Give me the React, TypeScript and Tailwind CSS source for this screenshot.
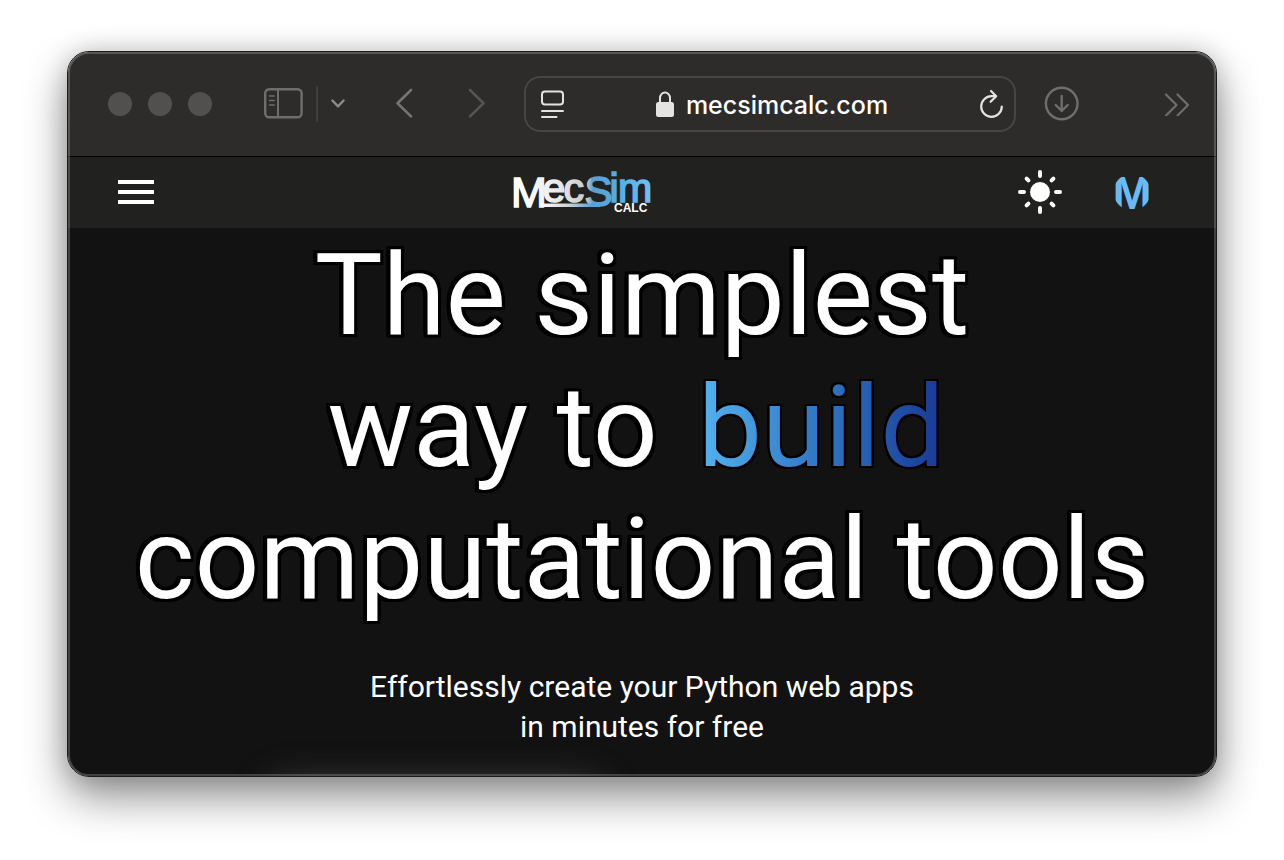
import React from "react";

function BrowserToolbar() {
  return (
    <div className="flex h-[105px] items-center border-b border-black bg-[#2e2c2a] pr-[25px] pl-10 text-[#6f6e6c]">
      <div className="flex shrink-0 gap-4">
        <span className="size-6 rounded-full bg-[#51504e]" />
        <span className="size-6 rounded-full bg-[#51504e]" />
        <span className="size-6 rounded-full bg-[#51504e]" />
      </div>

      <button aria-label="Show sidebar" className="ml-[51px] shrink-0">
        <svg width="40" height="32" viewBox="0 0 40 32" fill="none" stroke="currentColor">
          <rect x="2.2" y="1.3" width="36.4" height="28" rx="4" strokeWidth="2.4" />
          <path d="M15 1.500v28" strokeWidth="2" />
          <path d="M6.600 8h4.600M6.600 12.500h4.600M6.600 17h4.600" strokeWidth="1.6" strokeLinecap="round" />
        </svg>
      </button>
      <span className="ml-[13px] h-9 w-0.5 shrink-0 bg-[#3f3e3c]" />
      <button aria-label="Tab groups" className="ml-3 shrink-0 text-[#8c8b89]">
        <svg width="16" height="12" viewBox="0 0 16 12" fill="none" stroke="currentColor" strokeWidth="2.4" strokeLinecap="round" strokeLinejoin="round">
          <path d="M2.400 2.500 8 8.300 13.600 2.500" />
        </svg>
      </button>

      <div className="ml-[47px] flex shrink-0 gap-[47px]">
        <button aria-label="Back" className="text-[#757472]">
          <svg width="24" height="32" viewBox="0 0 24 32" fill="none" stroke="currentColor" strokeWidth="2.6" strokeLinecap="round" strokeLinejoin="round">
            <path d="M18 2 4.500 15.200 18 28.400" />
          </svg>
        </button>
        <button aria-label="Forward" className="text-[#555452]">
          <svg width="24" height="32" viewBox="0 0 24 32" fill="none" stroke="currentColor" strokeWidth="2.6" strokeLinecap="round" strokeLinejoin="round">
            <path d="M6 2 19.500 15.200 6 28.400" />
          </svg>
        </button>
      </div>

      <div className="ml-9 flex h-14 min-w-0 flex-1 items-center justify-between rounded-2xl border-2 border-[#474644] pr-2.5 pl-3.5 text-[#e4e3e1]">
        <button aria-label="Page menu" className="shrink-0">
          <svg width="26" height="30" viewBox="0 0 26 30" fill="none" stroke="currentColor" strokeWidth="2" strokeLinecap="round">
            <rect x="2" y="2.500" width="21" height="13" rx="3" />
            <path d="M2 22h21M2 28h14.500" />
          </svg>
        </button>
        <div className="flex items-center gap-3">
          <svg width="18" height="26" viewBox="0 0 18 26" fill="none">
            <path d="M4 12V7a5 5.500 0 0 1 10 0v5" stroke="currentColor" strokeWidth="2" />
            <rect x="0" y="11" width="18" height="15" rx="2.500" fill="currentColor" />
          </svg>
          <span className="pt-0.5 font-['Inter',sans-serif] text-[25px] leading-8 font-medium text-white">mecsimcalc.com</span>
        </div>
        <button aria-label="Reload" className="shrink-0">
          <svg width="26" height="30" viewBox="0 0 26 30" fill="none" stroke="currentColor" strokeWidth="2.200" strokeLinecap="round" strokeLinejoin="round">
            <path d="M17.500 7.200H13.500A10.300 10.300 0 1 0 23.800 17.500" />
            <path d="M13 2l5.200 5.200-5.600 5.600" />
          </svg>
        </button>
      </div>

      <button aria-label="Downloads" className="ml-7 shrink-0">
        <svg width="36" height="36" viewBox="0 0 36 36" fill="none" stroke="currentColor" strokeWidth="2.400" strokeLinecap="round" strokeLinejoin="round">
          <circle cx="17.700" cy="17.500" r="15.800" />
          <path d="M17.700 10v14.500M11.700 19l6 6 6-6" />
        </svg>
      </button>
      <button aria-label="More toolbar items" className="ml-[83px] shrink-0">
        <svg width="28" height="24" viewBox="0 0 28 24" fill="none" stroke="currentColor" strokeWidth="2.200" strokeLinecap="round" strokeLinejoin="round">
          <path d="M3 2.500l10.500 10.500L3 23.500M14.500 2.500 25 13 14.500 23.500" />
        </svg>
      </button>
    </div>
  );
}

function Logo() {
  return (
    <svg width="144" height="48" viewBox="0 0 144 48" role="img" aria-label="MecSim Calc">
      <defs>
        <linearGradient id="wordmark" gradientUnits="userSpaceOnUse" x1="4" y1="0" x2="142" y2="0">
          <stop offset="0" stopColor="#ffffff" />
          <stop offset="0.3" stopColor="#ececec" />
          <stop offset="0.53" stopColor="#c9c9cb" />
          <stop offset="0.57" stopColor="#5a9fcf" />
          <stop offset="0.75" stopColor="#55ace6" />
          <stop offset="1" stopColor="#70c0f4" />
        </linearGradient>
        <linearGradient id="swoosh" gradientUnits="userSpaceOnUse" x1="30" y1="0" x2="96" y2="0">
          <stop offset="0" stopColor="#ffffff" />
          <stop offset="0.4" stopColor="#d5d5d5" />
          <stop offset="0.8" stopColor="#55a0d5" />
          <stop offset="1" stopColor="#55ace6" />
        </linearGradient>
      </defs>
      <text fill="url(#wordmark)" stroke="url(#wordmark)" strokeWidth="1.600" fontFamily="'Liberation Sans', Arial, sans-serif">
        <tspan x="1" y="38.500" fontSize="43">M</tspan>
        <tspan x="32.500" y="33.500" fontSize="41">e</tspan>
        <tspan x="53.500" y="33.500" fontSize="41">c</tspan>
        <tspan x="74.500" y="38" fontSize="42">S</tspan>
        <tspan x="99.500" y="33.500" fontSize="41">i</tspan>
        <tspan x="108" y="33.500" fontSize="41">m</tspan>
      </text>
      <path d="M31 37.200h59" fill="none" stroke="url(#swoosh)" strokeWidth="3.600" />
      <text x="104" y="44" fontSize="12" fontWeight="700" fill="#ffffff" fontFamily="'Liberation Sans', Arial, sans-serif">CALC</text>
    </svg>
  );
}

function SiteHeader() {
  return (
    <header className="flex h-[71px] items-center justify-between bg-[#21211f] px-[46px] pb-px">
      <button aria-label="Menu" className="flex w-11 flex-col gap-1.5 p-1">
        <span className="h-1 w-full bg-white" />
        <span className="h-1 w-full bg-white" />
        <span className="h-1 w-full bg-white" />
      </button>
      <a href="#home">
        <Logo />
      </a>
      <div className="flex items-center gap-[38px] pr-[18px]">
        <button aria-label="Toggle light mode" className="px-2.5">
          <svg width="48" height="48" viewBox="0 0 48 48" fill="none" stroke="#fff" strokeWidth="4" strokeLinecap="round">
            <circle cx="24" cy="24" r="10" fill="#fff" stroke="none" />
            <path d="M24 4v4M24 40v4M4 24h4M40 24h4M10.600 10.600l1.800 1.800M35.600 35.600l1.800 1.800M10.600 37.400l1.800-1.800M35.600 12.400l1.800-1.800" />
          </svg>
        </button>
        <button aria-label="Account">
          <svg width="40" height="40" viewBox="0 0 40 40">
            <clipPath id="badge">
              <circle cx="20" cy="20" r="18.500" />
            </clipPath>
            <text x="20" y="36.500" textAnchor="middle" fontSize="47" fontWeight="700" fill="#69bbf2" clipPath="url(#badge)" fontFamily="'Liberation Sans', Arial, sans-serif">M</text>
          </svg>
        </button>
      </div>
    </header>
  );
}

function Hero() {
  return (
    <main className="relative overflow-hidden bg-[#121212] px-4 pt-px pb-[29px] text-center font-['Roboto',sans-serif] text-white">
      <h1 className="text-[114px] leading-[132px] font-[440] [text-shadow:-4px_-3px_0_#000,-4px_0_0_#000,-4px_3px_0_#000,0_-3px_0_#000,0_3px_0_#000,3px_-3px_0_#000,3px_0_0_#000,3px_3px_0_#000]">
        <span className="block">The simplest</span>
        <span className="block">
          way to{" "}
          <span className="inline-block bg-linear-to-r from-[#56b9f5] to-[#173290] bg-clip-text px-3 text-transparent [filter:drop-shadow(2px_0_0_#000)_drop-shadow(-2px_0_0_#000)_drop-shadow(0_2px_0_#000)_drop-shadow(0_-2px_0_#000)] [text-shadow:none]">
            build
          </span>
        </span>
        <span className="block">computational tools</span>
      </h1>
      <p className="mt-[42px] text-[30px] leading-10">
        Effortlessly create your Python web apps
        <br />
        in minutes for free
      </p>
      <div className="absolute -bottom-8 left-52 h-5 w-[320px] rounded-full shadow-[0_0_36px_4px_#4a4a4a]" />
    </main>
  );
}

export default function App() {
  return (
    <div className="min-h-screen bg-white px-[67px] pt-[51px] pb-[83px]">
      <div className="relative overflow-hidden rounded-[22px] border border-[#1c1c1c] shadow-[0_20px_44px_rgba(0,0,0,0.44),0_0_24px_rgba(0,0,0,0.16)]">
        <BrowserToolbar />
        <SiteHeader />
        <Hero />
        <div className="pointer-events-none absolute inset-0 rounded-[21px] border-2 border-white/20" />
      </div>
    </div>
  );
}
